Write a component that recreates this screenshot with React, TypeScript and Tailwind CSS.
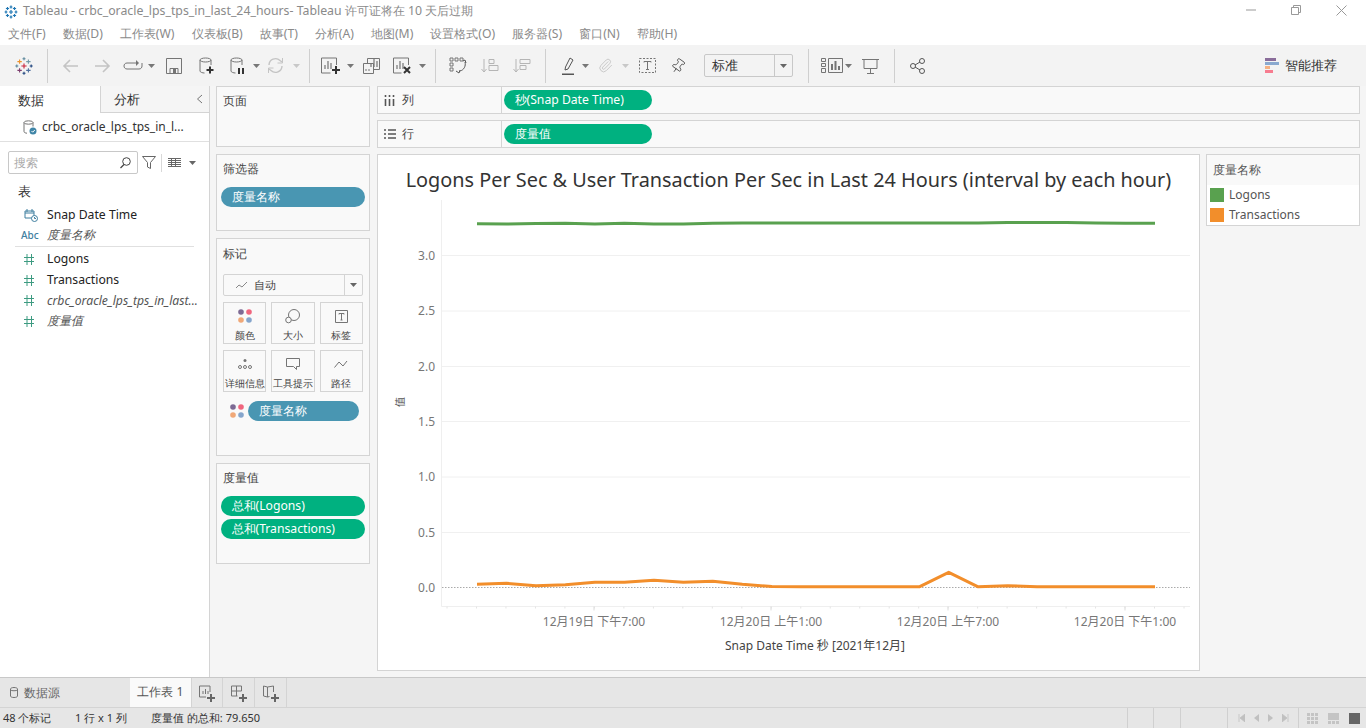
import React from "react";
import { Paperclip, Pin } from "lucide-react";

const ff = "font-['Noto_Sans','Noto_Sans_CJK_SC',sans-serif]";
const G = "#757575";

function Svg({ w, h, className = "", children }: { w: number; h: number; className?: string; children: React.ReactNode }) {
  return (
    <svg width={w} height={h} viewBox={`0 0 ${w} ${h}`} fill="none" stroke={G} strokeWidth={1} className={`shrink-0 ${className}`}>
      {children}
    </svg>
  );
}

function Caret({ className = "", color = "#777" }: { className?: string; color?: string }) {
  return (
    <svg width={7} height={4} viewBox="0 0 7 4" className={`shrink-0 ${className}`}>
      <path d="M0 0h7L3.5 4z" fill={color} />
    </svg>
  );
}

function Divider({ className = "" }: { className?: string }) {
  return <div className={`w-px h-[34px] bg-[#cfcfcf] shrink-0 ${className}`} />;
}

function Cross({ x, y, r, c, sw = 1.1 }: { x: number; y: number; r: number; c: string; sw?: number }) {
  return <path d={`M${x - r} ${y}h${2 * r}M${x} ${y - r}v${2 * r}`} stroke={c} strokeWidth={sw} fill="none" />;
}

function TableauLogo() {
  return (
    <svg width={18} height={18} viewBox="0 0 18 18" className="shrink-0">
      <Cross x={9} y={9} r={2.6} c="#c72037" />
      <Cross x={9} y={1.8} r={1.5} c="#5b879b" />
      <Cross x={9} y={16.2} r={1.5} c="#1f457e" />
      <Cross x={1.8} y={9} r={1.5} c="#59879b" />
      <Cross x={16.2} y={9} r={1.5} c="#1f447e" />
      <Cross x={4.6} y={4.6} r={2.2} c="#eb912b" />
      <Cross x={13.4} y={4.6} r={2.2} c="#7199a6" />
      <Cross x={4.6} y={13.4} r={2.2} c="#7c3e6e" />
      <Cross x={13.4} y={13.4} r={2.2} c="#4e6f9f" />
    </svg>
  );
}

function BlueLogo() {
  return (
    <svg width={14} height={14} viewBox="0 0 14 14" className="shrink-0">
      {[[7,7,2],[7,2,1.4],[7,12,1.4],[2,7,1.4],[12,7,1.4],[3.5,3.5,1.6],[10.5,3.5,1.6],[3.5,10.5,1.6],[10.5,10.5,1.6]].map(([x,y,r],i)=>(
        <Cross key={i} x={x} y={y} r={r} c="#1f77b4" sw={1.2} />
      ))}
    </svg>
  );
}

function Db({ badge }: { badge: "plus" | "pause" }) {
  return (
    <Svg w={16} h={18}>
      <ellipse cx={6.5} cy={3} rx={5.5} ry={2} />
      <path d="M1 3v11c0 1.2 2.5 2 4.5 2M12 3v5" />
      {badge === "plus" ? (
        <path d="M11 9.5v7M7.5 13h7" stroke="#333" strokeWidth={2} />
      ) : (
        <path d="M9 11v6M13 11v6" stroke="#333" strokeWidth={2} />
      )}
    </Svg>
  );
}

function Bars({ x = 5, y = 4 }: { x?: number; y?: number }) {
  return <path d={`M${x} ${y + 9}v-4M${x + 3} ${y + 9}v-8M${x + 6} ${y + 9}v-6`} strokeWidth={1.2} />;
}

function Toolbar() {
  return (
    <div className="h-[41px] bg-[#f3f3f3] flex items-center shrink-0 pl-[15px]">
      <TableauLogo />
      <Divider className="ml-[14px]" />
      <Svg w={17} h={14} className="ml-[14px]"><path d="M16 7H2M8 1 2 7l6 6" stroke="#c4c4c4" strokeWidth={1.6} /></Svg>
      <Svg w={17} h={14} className="ml-[15px]"><path d="M1 7h14M9 1l6 6-6 6" stroke="#c4c4c4" strokeWidth={1.6} /></Svg>
      <Svg w={20} h={12} className="ml-[12px]"><path d="M14 3H4C2 3 1 4.500 1 6s1 3 3 3h12c2 0 3-1.500 3-3V3" /><path d="M13 0l3 3-3 3" fill={G} stroke="none" /></Svg>
      <Caret className="ml-[5px]" />
      <Svg w={16} h={16} className="ml-[11px]"><path d="M.5.500h15v15H.5zM4 15.500v-5h8v5" /><path d="M7 11h3v4H7z" fill={G} stroke="none" /></Svg>
      <div className="ml-[17px] flex"><Db badge="plus" /></div>
      <div className="ml-[15px] flex"><Db badge="pause" /></div>
      <Caret className="ml-[7px]" />
      <Svg w={17} h={17} className="ml-[7px]"><path d="M2 8a6.500 6.500 0 0 1 11-4.500L15 5M15 9a6.500 6.500 0 0 1-11 4.500L2 12" stroke="#c4c4c4" strokeWidth={1.4} /><path d="M15.500 1v5h-5M1.500 16v-5h5" stroke="#c4c4c4" /></Svg>
      <Caret className="ml-[9px]" color="#c8c8c8" />
      <Divider className="ml-[9px]" />
      <Svg w={20} h={18} className="ml-[11px]"><path d="M15.500 8V1H.5v15h9" /><Bars x={4} y={3} /><path d="M15 9v8M11 13h8" stroke="#333" strokeWidth={2} /></Svg>
      <Caret className="ml-[6px]" />
      <Svg w={17} h={16} className="ml-[9px]"><path d="M4.500 5V.5h12v11H11" /><path d="M.5 5.500h10v10H.5z" /><Bars x={8} y={0} /><path d="M3 13v-2M6 13v-2" /></Svg>
      <Svg w={19} h={18} className="ml-[13px]"><path d="M15.500 8V1H.5v15h8" /><Bars x={4} y={3} /><path d="m11 10 6 6m0-6-6 6" stroke="#333" strokeWidth={2} /></Svg>
      <Caret className="ml-[7px]" />
      <Divider className="ml-[9px]" />
      <Svg w={18} h={18} className="ml-[13px]"><path d="M1 1h3v3H1zM6 1h3v3H6zM11 1h3v3h-3zM1 6h3v3H1zM1 11h3v3H1z" /><path d="M16 5c1 4-1 8-5 9M7 14l3 2 1-3M14 4l2-1 1 3" stroke="#555" /></Svg>
      <Svg w={18} h={16} className="ml-[14px]"><path d="M3 1v13M.5 11 3 14l2.500-3" stroke="#b5b5b5" /><path d="M8 1.500h5v4H8zM8 7.500h9v5H8z" stroke="#b5b5b5" /></Svg>
      <Svg w={18} h={16} className="ml-[14px]"><path d="M3 1v13M.5 11 3 14l2.500-3" stroke="#b5b5b5" /><path d="M7 1.500h10v4H7zM7 7.500h6v4H7z" stroke="#b5b5b5" /></Svg>
      <Divider className="ml-[14px]" />
      <Svg w={13} h={18} className="ml-[16px]"><path d="m8 1 3 2-5 9-3 1 .5-3z" stroke="#555" /><path d="M0 16.500h12V18H0z" fill="#555" stroke="none" /></Svg>
      <Caret className="ml-[7px]" />
      <Paperclip size={15} strokeWidth={1.3} color="#c0c0c0" className="ml-[9px] shrink-0" />
      <Caret className="ml-[9px]" color="#c8c8c8" />
      <Svg w={17} h={15} className="ml-[10px]"><path d="M.5.500h16v14H.5z" strokeDasharray="2 1.500" /><path d="M5 4.500V3.500h7v1M8.500 3.500v8M7 11.500h3" /></Svg>
      <Pin size={16} strokeWidth={1.2} color="#444" className="ml-[14px] shrink-0 rotate-[35deg]" />
      <div className="ml-[18px] w-[89px] h-[23px] border border-[#c8c8c8] rounded-[2px] flex items-center text-[13px] text-[#333] bg-[#f3f3f3] shrink-0">
        <span className="flex-1 pl-[7px]">标准</span>
        <span className="w-[18px] h-full border-l border-[#c8c8c8] flex items-center justify-center"><Caret color="#666" /></span>
      </div>
      <Divider className="ml-[15px]" />
      <Svg w={22} h={15} className="ml-[12px]"><path d="M.5.500h4v3h-4zM.5 5.500h4v3h-4zM.5 10.500h4v4h-4zM7.500.500h14v14h-14z" /><path d="M11 12V6M14.500 12V3M18 12V8" strokeWidth={2} /></Svg>
      <Caret className="ml-[2px]" />
      <Svg w={17} h={16} className="ml-[10px]"><path d="M0 1.500h17M2 1.500v9h13v-9M8.500 10.500V15M5 15.500h7" /></Svg>
      <Divider className="ml-[15px]" />
      <Svg w={15} h={16} className="ml-[15px]"><g stroke="#555"><circle cx={3} cy={8} r={2.500} /><circle cx={12} cy={3} r={2.500} /><circle cx={12} cy={13} r={2.500} /><path d="m5 7 5-3M5 9l5 3" /></g></Svg>
      <div className="ml-auto mr-[29px] flex items-center gap-[6px]">
        <div className="flex flex-col w-[14px]">
          <div className="h-[3px] w-[11px] mb-[1px] bg-[#8a6d9a]" />
          <div className="h-[3px] w-[14px] mb-[1px] bg-[#8aa9cf]" />
          <div className="h-[3px] w-[5px] mb-[1px] bg-[#f5b183]" />
          <div className="h-[3px] w-[8px] bg-[#f77c8f]" />
        </div>
        <span className="text-[13px] text-[#333]">智能推荐</span>
      </div>
    </div>
  );
}

function Pill({ label, color, className = "" }: { label: string; color: string; className?: string }) {
  return (
    <div className={`h-[20px] rounded-full flex items-center text-[12.2px] text-white whitespace-nowrap ${color} ${className}`}>{label}</div>
  );
}

function Hash() {
  return (
    <Svg w={10} h={11}><path d="M3 0v11M7.500 0v11M0 3.500h10M0 7.500h10" stroke="#3d9b81" /></Svg>
  );
}

function Field({ icon, label, italic, h = "h-[20.7px]" }: { icon: React.ReactNode; label: string; italic?: boolean; h?: string }) {
  return (
    <div className={`${h} flex items-center text-[12.2px] ${italic ? "italic text-[#555]" : "text-[#222]"}`}>
      <span className="w-[47px] pl-[24px] flex shrink-0">{icon}</span>
      <span className="whitespace-nowrap">{label}</span>
    </div>
  );
}

function DataPanel() {
  return (
    <div className="w-[210px] bg-white border-r border-[#d4d4d4] flex flex-col shrink-0">
      <div className="h-[27px] flex text-[13px] text-[#333] shrink-0">
        <div className="w-[100px] flex items-center pl-[18px] pt-[2px] bg-white">数据</div>
        <div className="flex-1 flex items-center pl-[13px] pt-[2px] bg-[#f5f5f5] border-l border-b border-[#d4d4d4] relative">
          分析
          <Svg w={7} h={10} className="ml-auto mr-[6px] -mt-[2px]"><path d="M6 1 1.500 5 6 9" /></Svg>
        </div>
      </div>
      <div className="h-[29px] flex items-center border-b border-[#e0e0e0] text-[12px] text-[#333] pl-[23px] shrink-0">
        <Svg w={14} h={15}>
          <ellipse cx={5.500} cy={2.500} rx={4.500} ry={1.700} />
          <path d="M1 2.500v9c0 1 1.500 1.700 3 1.700M10 2.500v4" />
          <circle cx={10} cy={11} r={3.500} fill="#3f85a7" stroke="none" />
          <path d="m8.500 11 1.200 1.200L11.800 10" stroke="#fff" />
        </Svg>
        <span className="ml-[5px] whitespace-nowrap">crbc_oracle_lps_tps_in_l...</span>
      </div>
      <div className="flex items-center pl-[8px] mt-[9px] h-[23px] shrink-0">
        <div className="w-[130px] h-[23px] border border-[#c8c8c8] rounded-[2px] flex items-center px-[5px] text-[12px] text-[#aaa]">
          搜索
          <Svg w={13} h={13} className="ml-auto"><circle cx={7.500} cy={5.500} r={3.800} stroke="#444" /><path d="M5 8.500 1.500 12" stroke="#444" strokeWidth={1.300} /></Svg>
        </div>
        <Svg w={14} h={13} className="ml-[4px]"><path d="M.5.500h13L8.500 6.500v6l-3-1.500V6.500z" stroke="#666" /></Svg>
        <div className="w-px h-[18px] bg-[#d8d8d8] ml-[5px]" />
        <Svg w={13} h={9} className="ml-[6px]"><path d="M0 .5h13M0 2.500h13M0 4.500h13M0 6.500h13M0 8.500h13M3.500 0v9M7.500 0v9" stroke="#666" /></Svg>
        <Caret className="ml-[8px]" color="#666" />
      </div>
      <div className="mt-[8px] pl-[18px] text-[13px] text-[#333] h-[20px] flex items-center">表</div>
      <div className="mt-[3px]">
        <Field label="Snap Date Time" h="h-[20px]" icon={
          <Svg w={14} h={13}><path d="M1 2h9v7H1zM3 0v3M8 0v3M1 4h9" stroke="#3f7f9f" /><circle cx={10.500} cy={9.500} r={3} fill="#fff" stroke="#3f7f9f" /><path d="M10.500 8v1.500h1.500" stroke="#3f7f9f" /></Svg>
        } />
        <div className="h-[20px] flex items-center italic text-[12px] text-[#555]">
          <span className="w-[47px] pl-[21px] not-italic text-[10px] font-medium text-[#3f7f9f] shrink-0">Abc</span>
          度量名称
        </div>
      </div>
      <div className="h-px bg-[#e0e0e0] mx-[15px] mt-[1px] mb-[2px]" />
      <Field label="Logons" icon={<Hash />} />
      <Field label="Transactions" icon={<Hash />} />
      <Field label="crbc_oracle_lps_tps_in_last..." italic icon={<Hash />} />
      <Field label="度量值" italic icon={<Hash />} />
    </div>
  );
}

function Card({ title, className = "", top = "pt-[5px]", children }: { title: string; className?: string; top?: string; children?: React.ReactNode }) {
  return (
    <div className={`border border-[#d4d4d4] bg-[#f9f9f9] shrink-0 ${className}`}>
      <div className={`text-[12px] text-[#444] pl-[6px] h-[25px] leading-[17px] ${top}`}>{title}</div>
      {children}
    </div>
  );
}

function MarkBtn({ label, icon }: { label: string; icon: React.ReactNode }) {
  return (
    <div className="h-[42px] border border-[#d4d4d4] flex flex-col items-center">
      <div className="h-[26px] flex items-center justify-center">{icon}</div>
      <div className="text-[10px] leading-[12px] text-[#444] whitespace-nowrap">{label}</div>
    </div>
  );
}

function Dots() {
  const r = 2.8;
  return (
    <svg width={14} height={14} viewBox="0 0 14 14" className="shrink-0">
      <circle cx={3} cy={3} r={r} fill="#7d6a94" />
      <circle cx={11} cy={3} r={r} fill="#f0667e" />
      <circle cx={3} cy={11} r={r} fill="#f0a878" />
      <circle cx={11} cy={11} r={r} fill="#85a5cc" />
    </svg>
  );
}

function CardsColumn() {
  return (
    <div className="w-[154px] flex flex-col shrink-0 ml-[6px]">
      <Card title="页面" className="h-[61px]" />
      <Card title="筛选器" className="h-[77px] mt-[7px]">
        <div className="px-[4px] mt-[7px]"><Pill label="度量名称" color="bg-[#4996b2]" className="pl-[10.5px]" /></div>
      </Card>
      <Card title="标记" top="pt-[6px]" className="h-[218px] mt-[7px]">
        <div className="mx-[6px] mt-[10px] h-[22px] border border-[#d4d4d4] rounded-[2px] flex items-center text-[11px] text-[#444]">
          <Svg w={14} h={8} className="ml-[11px]"><path d="M1 7l3-3 3 2 5-5" stroke="#888" /></Svg>
          <span className="ml-[5px]">自动</span>
          <span className="ml-auto w-[18px] h-full border-l border-[#d4d4d4] flex items-center justify-center"><Caret color="#666" /></span>
        </div>
        <div className="mx-[6px] mt-[6px] grid grid-cols-3 gap-x-[5px] gap-y-[6px]">
          <MarkBtn label="颜色" icon={<Dots />} />
          <MarkBtn label="大小" icon={<Svg w={15} h={15}><circle cx={9} cy={6} r={5.500} /><circle cx={3.500} cy={11} r={2.800} fill="#f9f9f9" /></Svg>} />
          <MarkBtn label="标签" icon={<Svg w={13} h={13}><path d="M.5.500h12v12H.5z" /><path d="M4 4.500V3.500h5v1M6.500 3.500V10M5.500 10h2" /></Svg>} />
          <MarkBtn label="详细信息" icon={<Svg w={14} h={10}><circle cx={7} cy={1.500} r={1.500} fill={G} stroke="none" /><circle cx={2} cy={8} r={1.500} /><circle cx={7} cy={8} r={1.500} /><circle cx={12} cy={8} r={1.500} /></Svg>} />
          <MarkBtn label="工具提示" icon={<Svg w={14} h={13}><path d="M.5.500h13v8h-3v3l-3-3H.5z" /></Svg>} />
          <MarkBtn label="路径" icon={<Svg w={14} h={9}><path d="M.5 7.500 5 2l4 4 4-5" /></Svg>} />
        </div>
        <div className="flex items-center mt-[9px] ml-[13px]">
          <Dots />
          <Pill label="度量名称" color="bg-[#4996b2]" className="ml-[4px] w-[111px] pl-[10.5px]" />
        </div>
      </Card>
      <Card title="度量值" className="h-[101px] mt-[7px]">
        <div className="px-[4px] mt-[7px] flex flex-col gap-[3px]">
          <Pill label="总和(Logons)" color="bg-[#00b180]" className="pl-[10.5px]" />
          <Pill label="总和(Transactions)" color="bg-[#00b180]" className="pl-[10.5px]" />
        </div>
      </Card>
    </div>
  );
}

function Shelf({ icon, label, pill, className = "" }: { icon: React.ReactNode; label: string; pill: string; className?: string }) {
  return (
    <div className={`h-[28px] border border-[#d4d4d4] bg-[#f9f9f9] flex items-center shrink-0 ${className}`}>
      <div className="w-[124px] h-full border-r border-[#d4d4d4] flex items-center pl-[6px] text-[12px] text-[#444] shrink-0">
        <span className="w-[18px] flex">{icon}</span>{label}
      </div>
      <Pill label={pill} color="bg-[#00b180]" className="ml-[2px] w-[148px] pl-[10.5px]" />
    </div>
  );
}

const xs = Array.from({ length: 24 }, (_, i) => 477 + i * 29.48);
const green = [223.8,224,223.4,223.2,224,223.2,224,224,223.2,223,223,223,223,223,223,223,223,223,222.4,222.4,222.4,223,223.2,223.2];
const orange = [584.3,583.3,585.7,584.7,582.3,582.3,580.3,582.3,581.3,584.3,586.5,586.8,586.8,586.8,586.8,586.8,572.3,586.8,585.7,586.8,586.8,586.8,586.8,586.8];
const pts = (a: number[]) => a.map((y, i) => `${xs[i].toFixed(1)},${y}`).join(" ");
const yt: [string, number][] = [["3.0",255.5],["2.5",311],["2.0",366.5],["1.5",421.5],["1.0",477],["0.5",532.5],["0.0",587.5]];

function Chart() {
  const minor = Array.from({ length: 26 }, (_, i) => 447 + i * 29.48);
  return (
    <div className="flex-1 bg-white border border-[#d4d4d4] flex flex-col min-w-0">
      <div className="h-[42px] flex items-end justify-center text-[19.85px] leading-[26px] pb-[4px] text-[#333] font-['Inter',sans-serif] whitespace-nowrap shrink-0">
        Logons Per Sec &amp; User Transaction Per Sec in Last 24 Hours (interval by each hour)
      </div>
      <svg width={820} height={473} viewBox="378 197 820 473" className="block shrink-0">
        <path d="M441.500 200V606.500H1190" stroke="#efefef" fill="none" />
        {yt.slice(0, 6).map(([t, y]) => <path key={t} d={`M442 ${y}H1190`} stroke="#f0f0f0" />)}
        <path d="M442 587.500H1190" stroke="#aaa" strokeDasharray="1.500 1.500" />
        {yt.map(([t, y]) => (
          <text key={t} x={435} y={y + 4} textAnchor="end" fontSize={12} fill="#777" fontFamily="Noto Sans">{t}</text>
        ))}
        {minor.map((x) => <path key={x} d={`M${x} 606.500v2`} stroke="#e4e4e4" />)}
        {[594, 771, 948, 1125].map((x) => <path key={x} d={`M${x} 606.500v4`} stroke="#ddd" />)}
        <text x={404} y={402} textAnchor="middle" fontSize={10} fill="#555" fontFamily="Noto Sans CJK SC" transform="rotate(-90 404 402)">值</text>
        {[[594,"12月19日 下午7:00"],[771,"12月20日 上午1:00"],[948,"12月20日 上午7:00"],[1125,"12月20日 下午1:00"]].map(([x,t]) => (
          <text key={x as number} x={x as number} y={626} textAnchor="middle" fontSize={12} fill="#777" fontFamily="Noto Sans, Noto Sans CJK SC">{t}</text>
        ))}
        <text x={815} y={650} textAnchor="middle" fontSize={12} fill="#444" fontFamily="Noto Sans, Noto Sans CJK SC">Snap Date Time 秒 [2021年12月]</text>
        <polyline points={pts(green)} fill="none" stroke="#59a14f" strokeWidth={3} strokeLinejoin="round" />
        <polyline points={pts(orange)} fill="none" stroke="#f28e2b" strokeWidth={3} strokeLinejoin="round" />
      </svg>
    </div>
  );
}

function Legend() {
  return (
    <div className="w-[154px] h-[72px] border border-[#d4d4d4] bg-white shrink-0 ml-[6px]">
      <div className="h-[30px] bg-[#f9f9f9] flex items-center pl-[6px] text-[12px] text-[#555]">度量名称</div>
      <div className="h-[20px] flex items-center pl-[3px] text-[12px] text-[#555]"><span className="w-[14px] h-[14px] bg-[#59a14f] mr-[5px]" />Logons</div>
      <div className="h-[20px] flex items-center pl-[3px] text-[12px] text-[#555]"><span className="w-[14px] h-[14px] bg-[#f28e2b] mr-[5px]" />Transactions</div>
    </div>
  );
}

function Tabs() {
  const Plus = () => <path d="M12 10v8M8 14h8" stroke="#666" strokeWidth={2} />;
  return (
    <div className="h-[30px] bg-[#e6e6e6] border-t border-[#c8c8c8] flex text-[12px] text-[#666] shrink-0">
      <div className="w-[130px] flex items-center pl-[10px]">
        <Svg w={8} h={11}><path d="M.5 2c0-2 7-2 7 0v7c0 2-7 2-7 0zM.5 3c1 1 6 1 7 0" /></Svg>
        <span className="ml-[6px]">数据源</span>
      </div>
      <div className="w-[61px] bg-[#fafafa] flex items-center justify-center text-[#555] text-[12.2px]">工作表 1</div>
      <div className="w-[32px] border-l border-r border-[#d4d4d4] flex items-center justify-center">
        <Svg w={16} h={18}><path d="M11 8V2H.5v11H7" /><path d="M4 10V7M6.500 10V5M9 10V7" /><Plus /></Svg>
      </div>
      <div className="w-[32px] border-r border-[#d4d4d4] flex items-center justify-center">
        <Svg w={16} h={18}><path d="M.5 2h10v5M.5 2v10h6M.5 7h10M5.500 2v10" /><Plus /></Svg>
      </div>
      <div className="w-[32px] border-r border-[#d4d4d4] flex items-center justify-center">
        <Svg w={16} h={18}><path d="M.5 2l4 1 6-1v6M.5 2v10l4 1 2-.5M4.500 3v10" /><Plus /></Svg>
      </div>
    </div>
  );
}

function StatusBar() {
  return (
    <div className="h-[21px] bg-[#e6e6e6] border-t border-[#d4d4d4] flex items-center text-[11px] text-[#333] pl-[3px] shrink-0">
      <span className="w-[72px] whitespace-nowrap">48 个标记</span>
      <span className="w-[76px] whitespace-nowrap">1 行 x 1 列</span>
      <span className="whitespace-nowrap">度量值 的总和: 79.650</span>
      <div className="ml-auto flex h-full">
        <div className="w-[26px] border-l border-[#d0d0d0]" />
        <div className="w-[27px] border-l border-[#d0d0d0]" />
        <div className="w-[47px] border-l border-[#d0d0d0]" />
        <div className="w-[71px] border-l border-[#d0d0d0] flex items-center justify-center gap-[9px]">
          <svg width={7} height={8} viewBox="0 0 7 8"><path d="M1 0v8M7 0v8L2 4z" stroke="#c0c0c0" fill="#c0c0c0" strokeWidth={0.8} /></svg>
          <svg width={5} height={8} viewBox="0 0 5 8"><path d="M5 0v8L0 4z" fill="#c0c0c0" /></svg>
          <svg width={5} height={8} viewBox="0 0 5 8"><path d="M0 0v8l5-4z" fill="#c0c0c0" /></svg>
          <svg width={7} height={8} viewBox="0 0 7 8"><path d="M6 0v8M0 0v8l5-4z" stroke="#c0c0c0" fill="#c0c0c0" strokeWidth={0.8} /></svg>
        </div>
        <div className="w-[68px] border-l border-[#d0d0d0] flex items-center pl-[8px] gap-[10px]">
          <div className="w-[11px] h-[11px] grid grid-cols-3 gap-[1px]">
            {Array.from({ length: 9 }, (_, i) => <span key={i} className="bg-[#c4c4c4]" />)}
          </div>
          <div className="w-[11px] flex flex-col gap-[1px]">
            <div className="h-[7px] bg-[#c4c4c4]" />
            <div className="h-[3px] grid grid-cols-3 gap-[1px]"><span className="bg-[#c4c4c4]" /><span className="bg-[#c4c4c4]" /><span className="bg-[#c4c4c4]" /></div>
          </div>
          <div className="w-[11px] h-[11px] bg-[#666]" />
        </div>
      </div>
    </div>
  );
}

export default function App() {
  return (
    <div className={`w-[1366px] h-[728px] overflow-hidden flex flex-col bg-[#f5f5f5] ${ff}`}>
      <div className="h-[23px] bg-white flex items-center pl-[4px] text-[12.3px] text-[#8a8a8a] shrink-0 relative">
        <BlueLogo />
        <span className="ml-[5px] whitespace-nowrap">Tableau - crbc_oracle_lps_tps_in_last_24_hours- Tableau 许可证将在 10 天后过期</span>
        <div className="ml-auto flex items-center gap-[35px] mr-[19px] -mt-[3px]">
          <Svg w={10} h={10}><path d="M0 5h10" stroke="#999" /></Svg>
          <Svg w={10} h={10}><path d="M.5 2.500h7v7h-7zM2.500 2.500v-2h7v7h-2" stroke="#999" /></Svg>
          <Svg w={11} h={11}><path d="m.5.500 10 10m0-10-10 10" stroke="#999" /></Svg>
        </div>
      </div>
      <div className="h-[22px] bg-white flex items-center pl-[8px] gap-[17px] text-[12.2px] text-[#8a8a8a] shrink-0 whitespace-nowrap">
        {["文件(F)","数据(D)","工作表(W)","仪表板(B)","故事(T)","分析(A)","地图(M)","设置格式(O)","服务器(S)","窗口(N)","帮助(H)"].map((m) => <span key={m}>{m}</span>)}
      </div>
      <Toolbar />
      <div className="flex-1 flex min-h-0">
        <DataPanel />
        <CardsColumn />
        <div className="flex-1 flex flex-col ml-[7px] mr-[6px] min-w-0">
          <Shelf label="列" pill="秒(Snap Date Time)" icon={<Svg w={11} h={11}><path d="M1.500 0v2M1.500 4v7M5.500 0v2M5.500 4v7M9.500 0v2M9.500 4v7" stroke="#555" strokeWidth={1.600} /></Svg>} />
          <Shelf label="行" pill="度量值" className="mt-[6px]" icon={<Svg w={12} h={10}><path d="M0 1h2M4 1h8M0 5h2M4 5h8M0 9h2M4 9h8" stroke="#555" strokeWidth={1.600} /></Svg>} />
          <div className="flex-1 flex mt-[6px] mb-[6px] min-h-0">
            <Chart />
            <Legend />
          </div>
        </div>
      </div>
      <Tabs />
      <StatusBar />
    </div>
  );
}
